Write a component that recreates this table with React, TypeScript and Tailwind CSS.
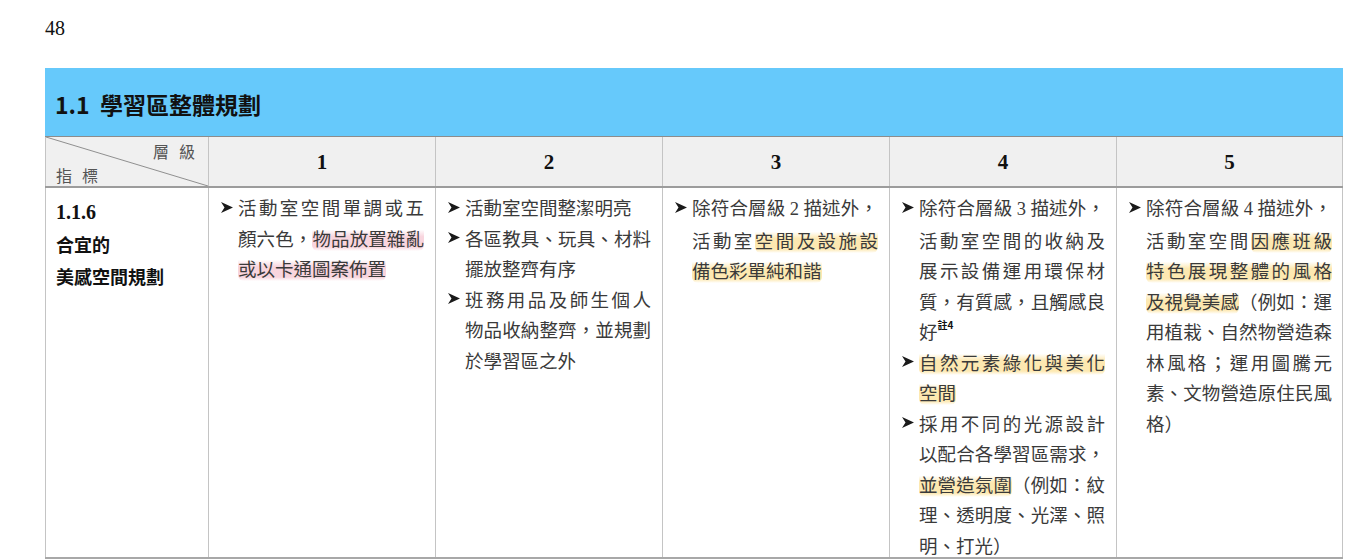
import React from "react"

const CJK = "font-['Noto_Sans_CJK_TC','Noto_Sans_CJK_SC',sans-serif]"
const SERIF = "font-['Liberation_Serif','Times_New_Roman',serif]"

function Bullet() {
  return (
    <span className="flex h-[30.5px] w-[17px] shrink-0 items-center">
      <svg width="12" height="11" viewBox="0 0 12 11">
        <path d="M0 0 L12 5.5 L0 11 L3.5 5.5 Z" fill="#1a1a1a" />
      </svg>
    </span>
  )
}

function Line({ children, j }: { children: React.ReactNode; j?: boolean }) {
  return (
    <div className={j ? "text-justify [text-align-last:justify]" : "text-left"}>
      {children}
    </div>
  )
}

function Hl({ children, c }: { children: React.ReactNode; c: "y" | "p" }) {
  const cls =
    c === "y"
      ? "bg-[linear-gradient(180deg,transparent_18%,rgba(251,210,100,0.5)_45%,rgba(251,210,100,0.5)_85%,transparent_100%)]"
      : "bg-[linear-gradient(180deg,transparent_18%,rgba(238,150,172,0.4)_45%,rgba(238,150,172,0.4)_85%,transparent_100%)]"
  return <span className={`${cls} rounded-[6px]`}>{children}</span>
}

function Num({ children }: { children: React.ReactNode }) {
  return <span className={SERIF}>{children}</span>
}

function Item({ children }: { children: React.ReactNode }) {
  return (
    <div className="flex">
      <Bullet />
      <div className="w-[186px]">{children}</div>
    </div>
  )
}

function Cell({ children, last }: { children?: React.ReactNode; last?: boolean }) {
  return (
    <div
      className={`border-l border-[#c4c4c4] pl-3 pt-[4px] ${last ? "border-r" : ""}`}
    >
      {children}
    </div>
  )
}

export default function App() {
  const levels = ["1", "2", "3", "4", "5"]

  return (
    <div className={`h-[560px] w-[1368px] overflow-hidden bg-white ${CJK}`}>
      <div className={`pl-[45px] pt-[16px] text-[20px] leading-[24px] text-[#111] ${SERIF}`}>48</div>

      <div className="ml-[45px] mt-[28px] w-[1298px]">
        {/* section banner */}
        <div className="h-[69px] border-b border-[#8c8c8c] bg-[#66c9fb] pl-[10px] pt-[22px]">
          <h1 className="text-[23px] font-bold leading-[28px] text-[#111]">
            1.1&nbsp;&nbsp;學習區整體規劃
          </h1>
        </div>

        {/* header row */}
        <div className="grid h-[51px] grid-cols-[163px_repeat(5,227px)] border-b-2 border-[#9c9c9c] bg-[#f0f0f0]">
          <div className="relative border-l border-[#c4c4c4]">
            <svg
              className="absolute inset-0 h-full w-full"
              viewBox="0 0 163 49"
              preserveAspectRatio="none"
            >
              <line x1="0" y1="0" x2="163" y2="49" stroke="#8f8f8f" strokeWidth="1" />
            </svg>
            <div className="absolute right-[3px] top-[4px] text-[16px] leading-[20px] tracking-[10px] text-[#555]">
              層級
            </div>
            <div className="absolute bottom-[1px] left-[10px] text-[16px] leading-[20px] tracking-[10px] text-[#555]">
              指標
            </div>
          </div>
          {levels.map((n, i) => (
            <div
              key={n}
              className={`flex items-center justify-center border-l border-[#c4c4c4] pt-[2px] text-[21px] font-bold text-[#111] ${SERIF} ${
                i === 4 ? "border-r" : ""
              }`}
            >
              {n}
            </div>
          ))}
        </div>

        {/* body row */}
        <div className="grid h-[371px] grid-cols-[163px_repeat(5,227px)] overflow-hidden border-b-2 border-[#a8a8a8] text-[18.5px] leading-[30.5px] text-[#3a3a3a]">
          <div className="border-l border-[#c4c4c4] pl-[10px] pt-[8px] leading-[32px] text-[#111]">
            <div className={`text-[20px] font-bold ${SERIF}`}>1.1.6</div>
            <div className="text-[18px] font-bold">合宜的</div>
            <div className="text-[18px] font-bold">美感空間規劃</div>
          </div>

          <Cell>
            <Item>
              <Line j>活動室空間單調或五</Line>
              <Line j>
                顏六色，<Hl c="p">物品放置雜亂</Hl>
              </Line>
              <Line>
                <Hl c="p">或以卡通圖案佈置</Hl>
              </Line>
            </Item>
          </Cell>

          <Cell>
            <Item>
              <Line>活動室空間整潔明亮</Line>
            </Item>
            <Item>
              <Line j>各區教具、玩具、材料</Line>
              <Line>擺放整齊有序</Line>
            </Item>
            <Item>
              <Line j>班務用品及師生個人</Line>
              <Line j>物品收納整齊，並規劃</Line>
              <Line>於學習區之外</Line>
            </Item>
          </Cell>

          <Cell>
            <Item>
              <Line j>
                除符合層級 <Num>2</Num> 描述外，
              </Line>
              <Line j>
                活動室<Hl c="y">空間及設施設</Hl>
              </Line>
              <Line>
                <Hl c="y">備色彩單純和諧</Hl>
              </Line>
            </Item>
          </Cell>

          <Cell>
            <Item>
              <Line j>
                除符合層級 <Num>3</Num> 描述外，
              </Line>
              <Line j>活動室空間的收納及</Line>
              <Line j>展示設備運用環保材</Line>
              <Line j>質，有質感，且觸感良</Line>
              <Line>
                好
                <span className="relative top-[3px] inline-block align-top text-[10px] font-bold leading-[12px] text-[#111]">
                  註4
                </span>
              </Line>
            </Item>
            <Item>
              <Line j>
                <Hl c="y">自然元素綠化與美化</Hl>
              </Line>
              <Line>
                <Hl c="y">空間</Hl>
              </Line>
            </Item>
            <Item>
              <Line j>採用不同的光源設計</Line>
              <Line j>以配合各學習區需求，</Line>
              <Line j>
                <Hl c="y">並營造氛圍</Hl>（例如：紋
              </Line>
              <Line j>理、透明度、光澤、照</Line>
              <Line>明、打光）</Line>
            </Item>
          </Cell>

          <Cell last>
            <Item>
              <Line j>
                除符合層級 <Num>4</Num> 描述外，
              </Line>
              <Line j>
                活動室空間<Hl c="y">因應班級</Hl>
              </Line>
              <Line j>
                <Hl c="y">特色展現整體的風格</Hl>
              </Line>
              <Line j>
                <Hl c="y">及視覺美感</Hl>（例如：運
              </Line>
              <Line j>用植栽、自然物營造森</Line>
              <Line j>林風格；運用圖騰元</Line>
              <Line j>素、文物營造原住民風</Line>
              <Line>格）</Line>
            </Item>
          </Cell>
        </div>
      </div>
    </div>
  )
}
